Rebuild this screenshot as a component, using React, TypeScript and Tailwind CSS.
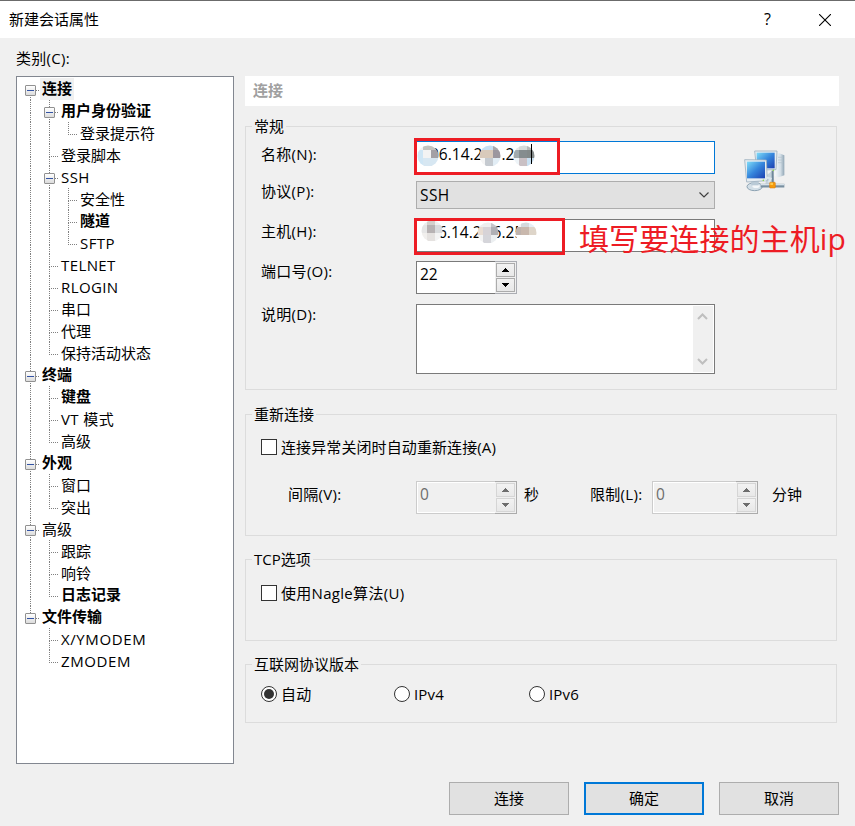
import type { ReactNode } from "react";
import clsx from "clsx";

interface TreeRow {
  label: string;
  // one char per column: "|" line through, "+" branch, "L" last branch, "r" first root, " " empty
  guides: string;
  bold?: boolean;
  open?: boolean;
  selected?: boolean;
}

const rows: TreeRow[] = [
  { label: "连接", guides: "r", bold: true, open: true, selected: true },
  { label: "用户身份验证", guides: "|+", bold: true, open: true },
  { label: "登录提示符", guides: "||L" },
  { label: "登录脚本", guides: "|+" },
  { label: "SSH", guides: "|+", open: true },
  { label: "安全性", guides: "||+" },
  { label: "隧道", guides: "||+", bold: true },
  { label: "SFTP", guides: "||L" },
  { label: "TELNET", guides: "|+" },
  { label: "RLOGIN", guides: "|+" },
  { label: "串口", guides: "|+" },
  { label: "代理", guides: "|+" },
  { label: "保持活动状态", guides: "|L" },
  { label: "终端", guides: "+", bold: true, open: true },
  { label: "键盘", guides: "|+", bold: true },
  { label: "VT 模式", guides: "|+" },
  { label: "高级", guides: "|L" },
  { label: "外观", guides: "+", bold: true, open: true },
  { label: "窗口", guides: "|+" },
  { label: "突出", guides: "|L" },
  { label: "高级", guides: "+", open: true },
  { label: "跟踪", guides: "|+" },
  { label: "响铃", guides: "|+" },
  { label: "日志记录", guides: "|L", bold: true },
  { label: "文件传输", guides: "L", bold: true, open: true },
  { label: "X/YMODEM", guides: " +" },
  { label: "ZMODEM", guides: " L" },
];

function Guide({ kind, open }: { kind: string; open: boolean }) {
  return (
    <div className="relative h-[22px] w-[19px] shrink-0 pl-[9px]">
      <div
        className={clsx(
          "h-[13px] w-[9px] border-dotted border-[#808080]",
          kind !== " " && kind !== "r" && "border-l",
          kind !== " " && kind !== "|" && "border-b"
        )}
      />
      <div
        className={clsx(
          "h-[9px] w-[9px] border-dotted border-[#808080]",
          kind !== " " && kind !== "L" && "border-l"
        )}
      />
      {open && (
        <div className="absolute left-[4px] top-[7px] flex h-[11px] w-[11px] items-center justify-center rounded-[1px] border border-[#919191] bg-gradient-to-b from-white to-[#dcdcdc]">
          <div className="h-px w-[7px] bg-[#3353a4]" />
        </div>
      )}
    </div>
  );
}

function Tree() {
  return (
    <div className="h-[688px] w-[218px] border border-[#828790] bg-white pl-[4px] pt-px">
      {rows.map((row, i) => (
        <div key={i} className="flex h-[22px]">
          {row.guides.split("").map((kind, col) => {
            // children of the last root hang below an expander with no line of its own
            return (
              <Guide
                key={col}
                kind={kind}
                open={!!row.open && col === row.guides.length - 1}
              />
            );
          })}
          <span
            className={clsx(
              "h-[22px] px-[2px]",
              row.bold ? "font-bold leading-[21px]" : "leading-[23px]",
              /^[A-Z]/.test(row.label) && "tracking-[0.4px]",
              row.label.endsWith("MODEM") && "tracking-[0.6px]",
              row.selected && "bg-[#f0f0f0]"
            )}
          >
            {row.label}
          </span>
        </div>
      ))}
    </div>
  );
}

function Group({ title, className, children }: { title: string; className: string; children: ReactNode }) {
  return (
    <fieldset className={clsx("w-[592px] border border-[#dcdcdc]", className)}>
      <legend className="ml-[6px] h-[22px] px-[2px] leading-[22px]">{title}</legend>
      {children}
    </fieldset>
  );
}

function Label({ children, className }: { children: ReactNode; className?: string }) {
  return (
    <label className={clsx("w-[155px] shrink-0 leading-[20px] tracking-[0.3px]", className)}>{children}</label>
  );
}

function Arrow({ down, disabled }: { down?: boolean; disabled?: boolean }) {
  return (
    <div
      className={clsx(
        "flex h-[14px] w-[19px] items-center justify-center border bg-gradient-to-b from-[#f2f2f2] to-[#e8e8e8]",
        disabled ? "border-[#d5d5d5]" : "border-[#acacac]"
      )}
    >
      <svg width="7" height="4" viewBox="0 0 7 4" shapeRendering="crispEdges" fill={disabled ? "#6d6d6d" : "#000"}>
        <path d={down ? "M0 0h7v1H6v1H5v1H4v1H3V3H2V2H1V1H0z" : "M0 4h7V3H6V2H5V1H4V0H3v1H2v1H1v1H0z"} />
      </svg>
    </div>
  );
}

function Spinner({ value, disabled, className }: { value: string; disabled?: boolean; className: string }) {
  return (
    <div className={clsx("flex h-[33px] shrink-0", className)}>
      <div
        className={clsx(
          "grow border-y border-l pl-[3px] text-[15.5px] leading-[25px]",
          disabled
            ? "border-[#cccccc] text-[#6d6d6d] shadow-[inset_1px_1px_0_#fff,inset_0_-1px_0_#fff]"
            : "border-[#7a7a7a] bg-white"
        )}
      >
        {value}
      </div>
      <div
        className={clsx(
          "flex w-[22px] flex-col gap-px border-y border-r p-px",
          disabled ? "border-[#ababab]" : "border-[#abadb3]"
        )}
      >
        <Arrow disabled={disabled} />
        <Arrow disabled={disabled} down />
      </div>
    </div>
  );
}

function Checkbox({ children, className }: { children: ReactNode; className?: string }) {
  return (
    <label className={clsx("flex h-[20px] items-center gap-[4px]", className)}>
      <span className="h-[16px] w-[16px] border border-[#333333] bg-white" />
      <span className="leading-[20px]">{children}</span>
    </label>
  );
}

function Radio({ children, checked, className }: { children: ReactNode; checked?: boolean; className?: string }) {
  return (
    <label className={clsx("flex h-[20px] items-center gap-[4px]", className)}>
      <span className="flex h-[16px] w-[16px] items-center justify-center rounded-full border border-[#333333] bg-white">
        {checked && <span className="h-[10px] w-[10px] rounded-full bg-[#333333]" />}
      </span>
      <span className="leading-[20px] tracking-[0.15px]">{children}</span>
    </label>
  );
}

// pixelated dot that hides part of an address
function Mosaic({ id, className, colors }: { id: string; className: string; colors: string[] }) {
  return (
    <svg className={clsx("absolute", className)} width="22" height="22" viewBox="0 0 22 22">
      <clipPath id={id}>
        <circle cx="11" cy="11" r="10.5" />
      </clipPath>
      <g clipPath={`url(#${id})`}>
        {colors.map((c, i) => (
          <rect key={i} x={(i % 3) * 8 - 2} y={Math.floor(i / 3) * 8 - 3} width="8.1" height="8.1" fill={c} />
        ))}
      </g>
    </svg>
  );
}

function NetworkIcon() {
  return (
    <svg width="42" height="42" viewBox="0 0 126 126">
      <defs>
        <linearGradient id="screen" x1="0" y1="0" x2="1" y2="1">
          <stop offset="0" stopColor="#7fdcf8" />
          <stop offset="0.5" stopColor="#3585dc" />
          <stop offset="1" stopColor="#1c3fb0" />
        </linearGradient>
        <linearGradient id="tower" x1="0" y1="0" x2="1" y2="0">
          <stop offset="0" stopColor="#f6f9fb" />
          <stop offset="0.6" stopColor="#d3dee6" />
          <stop offset="1" stopColor="#90a5b5" />
        </linearGradient>
      </defs>
      <path d="M92 12l14-2 15 6v60l-17 6-12-4z" fill="url(#tower)" />
      <path d="M102 22h13M102 30h13M102 38h13" stroke="#b3c2cd" strokeWidth="2" />
      <path d="M32 3h67l-3 56-58 1z" fill="#e6edf2" stroke="#9fb1bf" strokeWidth="2.5" />
      <path d="M38 8h54v47H38z" fill="url(#screen)" />
      <path d="M70 74l16-13 6 40H64z" fill="#c4d2dc" />
      <path d="M86 62v38" stroke="#6f8799" strokeWidth="6" />
      <ellipse cx="32" cy="110" rx="23" ry="12" fill="#d3dfe7" stroke="#8da3b3" strokeWidth="3" />
      <ellipse cx="36" cy="108" rx="11" ry="6" fill="#f3f7f9" />
      <path d="M22 92h22v14H22z" fill="#b9cad6" />
      <path d="M2 29l65 1 3 62-62 4z" fill="#e6edf2" stroke="#9fb1bf" strokeWidth="2.5" />
      <path d="M9 35h54v50H9z" fill="url(#screen)" />
      <path d="M60 92l10-9 10 3-6 12" fill="none" stroke="#dce6ec" strokeWidth="6" />
      <circle cx="58" cy="91" r="2.5" fill="#8bd34a" />
      <circle cx="88" cy="61" r="2.5" fill="#8bd34a" />
      <path d="M50 107h71" stroke="#788fa0" strokeWidth="11" />
      <path d="M50 104h71" stroke="#d7e2ea" strokeWidth="4" />
      <rect x="77" y="97" width="17" height="17" rx="2" fill="#f59a0c" stroke="#d9780a" strokeWidth="1.5" />
      <rect x="79" y="98" width="8" height="7" fill="#ffca4b" />
    </svg>
  );
}

export default function App() {
  return (
    <div className="flex h-[826px] w-[855px] flex-col overflow-hidden bg-[#f0f0f0] font-['Open_Sans','Noto_Sans_CJK_SC',sans-serif] text-[15px] text-black">
      {/* Title bar */}
      <div className="flex h-[38px] shrink-0 items-center border-t border-[#6b6b6b] bg-white pl-[9px] pr-[24px]">
        <span className="grow pb-[2px] leading-[20px]">新建会话属性</span>
        <span className="mr-[48px] pb-[2px] text-[16px]">?</span>
        <svg width="12" height="12" viewBox="0 0 12 12" stroke="#000" strokeWidth="1.1" fill="none">
          <path d="M0 0L12 12M12 0L0 12" />
        </svg>
      </div>

      <div className="flex px-[16px]">
        <div className="w-[229px] shrink-0">
          <div className="h-[38px] pt-[10px] leading-[20px] tracking-[0.3px]">类别(C):</div>
          <Tree />
        </div>

        <div className="w-[594px] pt-[38px]">
          <div className="h-[30px] bg-white pl-[8px] font-bold leading-[29px] text-[#a0a0a0]">连接</div>

          <Group title="常规" className="mt-[9px] h-[275px]">
            <div className="relative flex pl-[15px] pt-[4px]">
              <div className="flex w-[454px] flex-col">
                <div className="flex h-[33px]">
                  <Label className="pt-[3px]">名称(N):</Label>
                  <div className="relative grow border border-[#0078d7] bg-white pl-[13px] text-[15.5px] leading-[25px]">
                    <span>06.14.2</span>
                    <span className="ml-[19px]">.2</span>
                    <Mosaic id="m1" className="left-0 top-[3px]" colors={["#f1f1f1", "#c3c3bf", "#c3c3bf", "#cfe6f5", "#f3f3f3", "#a3a0a5", "#cfe6f5", "#d7e7f2", "#d7e7f2"]} />
                    <Mosaic id="m2" className="left-[62px] top-[3px]" colors={["#c6e0f4", "#c6e0f4", "#a8a9ad", "#d9cabb", "#d9cabb", "#9c979f", "#f5f5f5", "#c5cad0", "#e2edf5"]} />
                    <Mosaic id="m3" className="left-[96px] top-[3px]" colors={["#e8e8e8", "#d5dada", "#b5b9ba", "#a2aaae", "#858d8f", "#838a8a", "#eef4f8", "#c9c0c4", "#c8e0f2"]} />
                    <span className="absolute left-[114px] top-[2px] h-[20px] w-px bg-black" />
                  </div>
                </div>

                <div className="mt-[7px] flex h-[28px]">
                  <Label>协议(P):</Label>
                  <div className="flex grow items-center justify-between border border-[#adadad] bg-[#e1e1e1] pl-[3px] pr-[5px] text-[15.5px]">
                    <span className="leading-[20px] tracking-[0.4px]">SSH</span>
                    <svg width="10" height="6" viewBox="0 0 10 6" fill="none" stroke="#404040" strokeWidth="1.2">
                      <path d="M0.5 0.5L5 5L9.5 0.5" />
                    </svg>
                  </div>
                </div>

                <div className="mt-[10px] flex h-[33px]">
                  <Label className="pt-[2px]">主机(H):</Label>
                  <div className="relative grow border border-[#7a7a7a] bg-white pl-[21px] text-[15.5px] leading-[25px]">
                    <span>6.14.2</span>
                    <span className="ml-[11px]">6.25</span>
                    <Mosaic id="m4" className="left-[4px] top-0" colors={["#eeeeee", "#d3cfcb", "#f0f0f0", "#e6e6e6", "#b7b2b3", "#d9dbdd", "#f1efed", "#e5e2e0", "#f4f4f4"]} />
                    <Mosaic id="m5" className="left-[60px] top-[2px]" colors={["#efefef", "#eeeeee", "#c5c5c9", "#e9ddd3", "#d7d3d7", "#b0b0b5", "#f4f4f4", "#d5d5da", "#eceff1"]} />
                    <Mosaic id="m6" className="left-[98px] top-[2px]" colors={["#f5f5f5", "#d5dadd", "#e6eff6", "#bfb3ad", "#c9b8ad", "#ded5c9", "#ffffff", "#ffffff", "#ffffff"]} />
                  </div>
                </div>

                <div className="mt-[9px] flex h-[33px]">
                  <Label>端口号(O):</Label>
                  <Spinner value="22" className="w-[101px]" />
                </div>

                <div className="mt-[10px] flex h-[70px]">
                  <Label>说明(D):</Label>
                  <div className="flex grow justify-end border border-[#7a7a7a] bg-white p-px">
                    <div className="flex w-[20px] flex-col items-center justify-between bg-[#f0f0f0] py-[7px] pr-px">
                      <svg width="11" height="7" viewBox="0 0 11 7" fill="none" stroke="#bfbfbf" strokeWidth="2">
                        <path d="M1 6L5.5 1.5L10 6" />
                      </svg>
                      <svg width="11" height="7" viewBox="0 0 11 7" fill="none" stroke="#bfbfbf" strokeWidth="2">
                        <path d="M1 1L5.5 5.5L10 1" />
                      </svg>
                    </div>
                  </div>
                </div>
              </div>

              <div className="ml-[29px] mt-[9px]">
                <NetworkIcon />
              </div>

              {/* Red marks over the form */}
              <div className="absolute left-[168px] top-px h-[37px] w-[146px] border-[3px] border-[#ed1c24]" />
              <div className="absolute left-[168px] top-[81px] h-[37px] w-[151px] border-[3px] border-[#ed1c24]" />
              <span className="absolute left-[333px] top-[82px] whitespace-nowrap text-[30px] leading-[40px] tracking-[0.1px] text-[#ed1c24]">
                填写要连接的主机ip
              </span>
            </div>
          </Group>

          <Group title="重新连接" className="mt-[13px] h-[133px]">
            <div className="pl-[15px] pt-[12px]">
              <Checkbox className="tracking-[0.1px]">连接异常关闭时自动重新连接(A)</Checkbox>
              <div className="mt-[24px] flex h-[33px] leading-[26px]">
                <span className="mr-[27px] w-[128px] pl-[27px] tracking-[0.3px]">间隔(V):</span>
                <Spinner value="0" disabled className="w-[101px]" />
                <span className="ml-[7px] w-[66px]">秒</span>
                <span className="w-[62px] tracking-[0.3px]">限制(L):</span>
                <Spinner value="0" disabled className="w-[106px]" />
                <span className="ml-[14px]">分钟</span>
              </div>
            </div>
          </Group>

          <Group title="TCP选项" className="mt-[12px] h-[93px]">
            <div className="pl-[15px] pt-[13px]">
              <Checkbox className="tracking-[0.3px]">使用Nagle算法(U)</Checkbox>
            </div>
          </Group>

          <Group title="互联网协议版本" className="mt-[12px] h-[70px]">
            <div className="flex pl-[15px] pt-[9px]">
              <Radio checked className="w-[133px]">自动</Radio>
              <Radio className="w-[135px]">IPv4</Radio>
              <Radio>IPv6</Radio>
            </div>
          </Group>
        </div>
      </div>

      {/* Footer */}
      <div className="mt-[18px] flex justify-end gap-[15px] pr-[16px]">
        <button className="h-[33px] w-[120px] border border-[#adadad] bg-[#e1e1e1]">连接</button>
        <button className="h-[33px] w-[120px] border-2 border-[#0078d7] bg-[#e1e1e1]">确定</button>
        <button className="h-[33px] w-[120px] border border-[#adadad] bg-[#e1e1e1]">取消</button>
      </div>
    </div>
  );
}
